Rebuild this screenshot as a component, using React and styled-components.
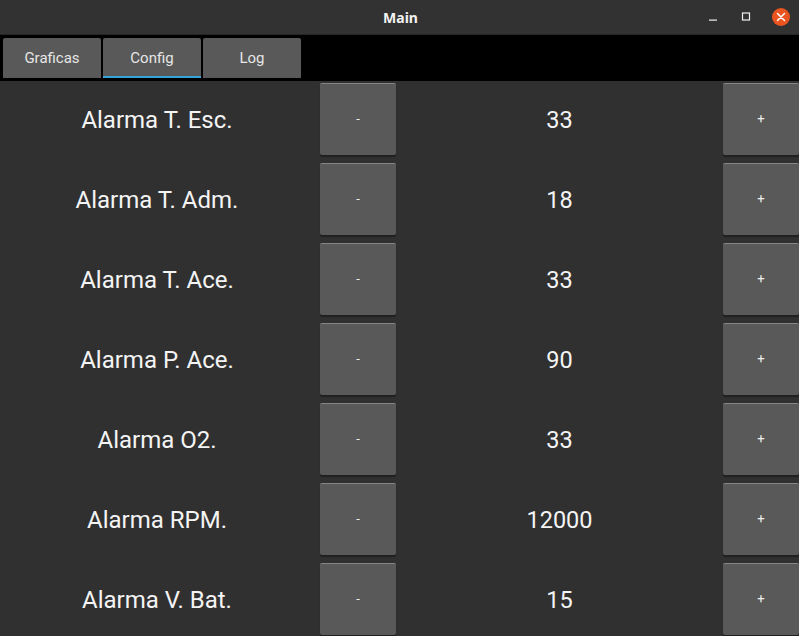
import React from "react";
import styled, { createGlobalStyle } from "styled-components";

const GlobalStyle = createGlobalStyle`
  html, body { margin: 0; padding: 0; background: #303030; overflow: hidden; }
  * { box-sizing: border-box; }
`;

const Window = styled.div`
  width: 799px;
  height: 636px;
  display: flex;
  flex-direction: column;
  background: #303030;
  overflow: hidden;
  font-family: Roboto, "Noto Sans", sans-serif;
`;

const TitleBar = styled.div`
  height: 35px;
  flex: none;
  display: grid;
  grid-template-columns: 1fr auto 1fr;
  align-items: center;
  background: #323232;
  border-bottom: 1px solid #262626;
`;

const Title = styled.div`
  grid-column: 2;
  color: #f2f2f2;
  font-family: "Noto Sans", "DejaVu Sans", sans-serif;
  font-weight: 700;
  font-size: 14px;
  padding-left: 2px;
  padding-top: 1px;
`;

const Controls = styled.div`
  grid-column: 3;
  justify-self: end;
  display: flex;
  align-items: center;
  gap: 17px;
  padding-right: 8px;
`;

const CtrlIcon = styled.svg`
  display: block;
`;

const TabStrip = styled.div`
  height: 46px;
  flex: none;
  background: #000;
  display: flex;
  gap: 2px;
  padding: 3px 0 0 3px;
`;

const Tab = styled.div`
  width: 98px;
  height: 40px;
  background: #595959;
  border-radius: 2px 2px 0 0;
  display: flex;
  align-items: center;
  justify-content: center;
  color: #e6e6e6;
  font-size: 15px;
  box-shadow: inset 0 -2px 0 ${(p) => (p.$active ? "#38a3d6" : "transparent")};
`;

const Grid = styled.div`
  flex: 1;
  display: grid;
  grid-template-columns: 320px 76px 1fr 76px;
  grid-auto-rows: 80px;
  align-content: start;
`;

const Label = styled.div`
  display: flex;
  align-items: center;
  justify-content: center;
  color: #f4f4f4;
  font-size: 24px;
  padding-right: 6px;
  padding-bottom: 2px;
`;

const Value = styled(Label)`
  font-size: 23.5px;
  padding-right: 0;
`;

const Btn = styled.div`
  margin-top: 1.5px;
  height: 72px;
  background: #595959;
  border-top: 1px solid #858585;
  border-radius: 2px;
  box-shadow: 0 2px 1px rgba(0, 0, 0, 0.35);
  display: flex;
  align-items: center;
  justify-content: center;
  color: #f0f0f0;
  font-size: 13px;
  padding-bottom: 1px;
`;

const rows = [
  ["Alarma T. Esc.", "33"],
  ["Alarma T. Adm.", "18"],
  ["Alarma T. Ace.", "33"],
  ["Alarma P. Ace.", "90"],
  ["Alarma O2.", "33"],
  ["Alarma RPM.", "12000"],
  ["Alarma V. Bat.", "15"],
];

export default function App() {
  return (
    <>
      <GlobalStyle />
      <Window>
        <TitleBar>
          <Title>Main</Title>
          <Controls>
            <CtrlIcon width="16" height="16" viewBox="0 0 16 16">
              <rect x="4" y="10.5" width="8" height="1.2" fill="#f0f0f0" />
            </CtrlIcon>
            <CtrlIcon width="16" height="16" viewBox="0 0 16 16">
              <rect x="4.5" y="4" width="7" height="7" fill="none" stroke="#f0f0f0" strokeWidth="1.2" />
            </CtrlIcon>
            <CtrlIcon width="20" height="20" viewBox="0 0 20 20">
              <circle cx="10" cy="10" r="9" fill="#e9541f" />
              <path d="M6.5 6.5 L13.5 13.5 M13.5 6.5 L6.5 13.5" stroke="#fff" strokeWidth="1.5" strokeLinecap="round" />
            </CtrlIcon>
          </Controls>
        </TitleBar>
        <TabStrip>
          <Tab>Graficas</Tab>
          <Tab $active>Config</Tab>
          <Tab>Log</Tab>
        </TabStrip>
        <Grid>
          {rows.map(([label, value]) => (
            <React.Fragment key={label}>
              <Label>{label}</Label>
              <Btn>-</Btn>
              <Value>{value}</Value>
              <Btn>+</Btn>
            </React.Fragment>
          ))}
        </Grid>
      </Window>
    </>
  );
}
